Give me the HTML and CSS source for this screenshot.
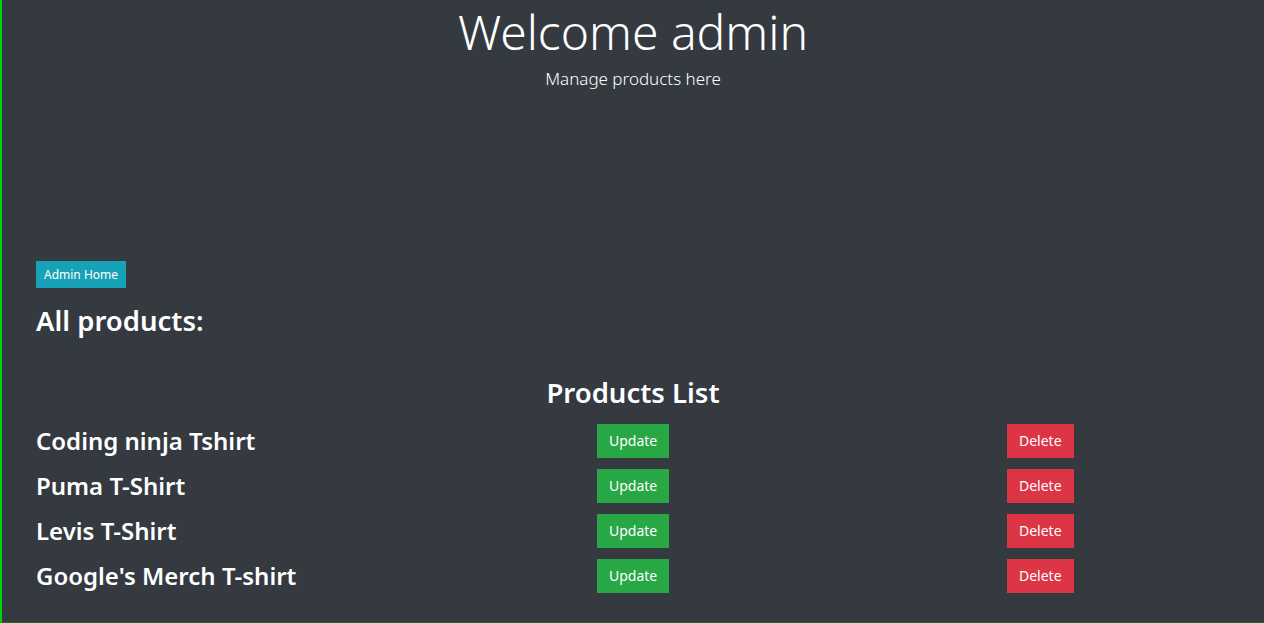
FILE: index.html
```html
<!DOCTYPE html>
<html>
<head>
<meta charset="utf-8">
<link rel="stylesheet" href="styles.css">
<title>Admin</title>
</head>
<body>
<div class="page">
  <header class="hero">
    <h1 class="hero-title">Welcome admin</h1>
    <p class="hero-lead">Manage products here</p>
  </header>
  <main class="content">
    <a class="btn btn-info btn-sm" href="#">Admin Home</a>
    <h2 class="section-title">All products:</h2>
    <h2 class="list-title">Products List</h2>
    <div class="products">
      <div class="product-row">
        <h3 class="product-name">Coding ninja Tshirt</h3>
        <div class="cell-update"><button class="btn btn-success">Update</button></div>
        <div class="cell-delete"><button class="btn btn-danger">Delete</button></div>
      </div>
      <div class="product-row">
        <h3 class="product-name">Puma T-Shirt</h3>
        <div class="cell-update"><button class="btn btn-success">Update</button></div>
        <div class="cell-delete"><button class="btn btn-danger">Delete</button></div>
      </div>
      <div class="product-row">
        <h3 class="product-name">Levis T-Shirt</h3>
        <div class="cell-update"><button class="btn btn-success">Update</button></div>
        <div class="cell-delete"><button class="btn btn-danger">Delete</button></div>
      </div>
      <div class="product-row">
        <h3 class="product-name">Google's Merch T-shirt</h3>
        <div class="cell-update"><button class="btn btn-success">Update</button></div>
        <div class="cell-delete"><button class="btn btn-danger">Delete</button></div>
      </div>
    </div>
  </main>
</div>
</body>
</html>
```

FILE: styles.css
```css
html, body {
  margin: 0;
  padding: 0;
  height: 100%;
}
body {
  background: #343a40;
  color: #fff;
  font-family: "Noto Sans", "Open Sans", sans-serif;
  overflow: hidden;
}
.page {
  min-height: 100%;
  box-sizing: border-box;
  border-left: 2px solid #00d60a;
  border-bottom: 1px solid #1f6b25;
}
.hero {
  text-align: center;
}
.hero-title {
  margin: 0;
  font-size: 48px;
  font-weight: 300;
  line-height: 64px;
}
.hero-lead {
  margin: 0;
  font-size: 17px;
  font-weight: 300;
  line-height: 30px;
}
.content {
  padding: 167px 34px 0;
}
.btn {
  display: inline-block;
  border: none;
  color: #fff;
  font-family: inherit;
  text-decoration: none;
  cursor: pointer;
}
.btn-sm {
  font-size: 12px;
  line-height: 27px;
  height: 27px;
  padding: 0 8px;
}
.btn-info {
  background: #17a2b8;
}
.section-title {
  margin: 8px 0 0;
  font-size: 27.5px;
  font-weight: 600;
  line-height: 50px;
}
.list-title {
  margin: 22px 0 0;
  text-align: center;
  font-size: 27.5px;
  font-weight: 600;
  line-height: 50px;
}
.products {
  display: flex;
  flex-direction: column;
  gap: 11px;
  margin-top: 6px;
}
.product-row {
  display: grid;
  grid-template-columns: 561px 410px auto;
  align-items: center;
  height: 34px;
}
.product-name {
  margin: 0;
  font-size: 24px;
  font-weight: 600;
  line-height: 34px;
}
.btn-success, .btn-danger {
  font-size: 14px;
  height: 34px;
  line-height: 34px;
  padding: 0 12px;
}
.btn-success { background: #28a745; }
.btn-danger { background: #dc3545; }
.cell-update, .cell-delete {
  display: flex;
}
```
